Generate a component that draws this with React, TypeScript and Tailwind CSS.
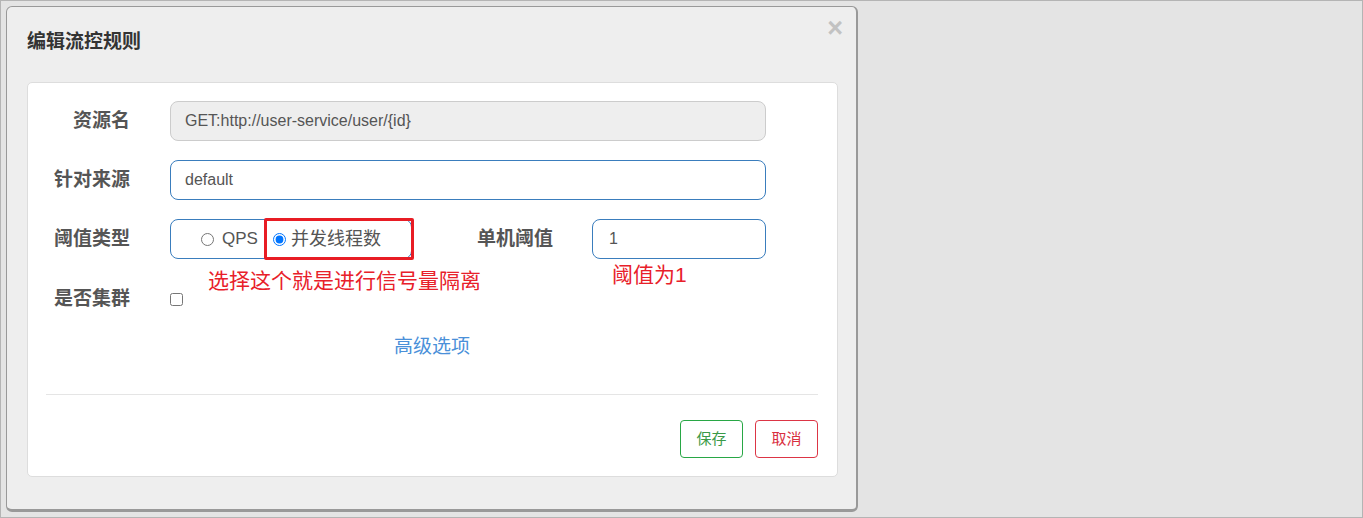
const font = { fontFamily: '"Liberation Sans", "Noto Sans CJK SC", sans-serif' };

const Label = ({ text, className = "" }: { text: string; className?: string }) => (
  <div className={`shrink-0 text-right text-[19px] font-bold text-[#555] ${className}`}>{text}</div>
);

const App = () => {
  return (
    <div style={font} className="h-[518px] w-full border border-[#b4b4b4] bg-[#e4e4e4] pl-[5px] pt-[5px]">
      <div className="flex h-[506px] w-[852px] flex-col rounded-md border-t border-l border-r-2 border-b-[3px] border-[#999] bg-[#eeeeee]">
        {/* header */}
        <div className="relative flex h-[75px] shrink-0 items-center pl-[20px] pb-[4px]">
          <h4 className="text-[19px] font-bold text-[#333]">编辑流控规则</h4>
          <span className="absolute right-[13px] top-[8px] text-[27px] font-bold leading-none text-[#c2c2c2]">×</span>
        </div>

        {/* body */}
        <div className="ml-[20px] w-[811px] rounded-[5px] border border-[#dddddd] bg-white pl-[18px] pr-[19px] pt-[18px] pb-[18px]">
          <div className="flex h-10 items-center">
            <Label text="资源名" className="w-[84px]" />
            <div className="ml-[40px] flex h-10 w-[596px] items-center rounded-lg border border-[#cccccc] bg-[#eeeeee] px-[14px] text-[16px] text-[#555]">
              GET:http://user-service/user/{"{id}"}
            </div>
          </div>

          <div className="mt-[19px] flex h-10 items-center">
            <Label text="针对来源" className="w-[84px]" />
            <div className="ml-[40px] flex h-10 w-[596px] items-center rounded-lg border border-[#3a7dbd] bg-white px-[14px] text-[16px] text-[#555]">
              default
            </div>
          </div>

          <div className="relative mt-[19px] flex h-10 items-center">
            <Label text="阈值类型" className="w-[84px]" />
            <div className="ml-[40px] flex h-10 w-[242px] items-center rounded-lg border border-[#3a7dbd] pl-[30px] text-[18px] text-[#555]">
              <label className="flex items-center gap-[8px] text-[17px]">
                <input type="radio" name="grade" className="m-0 h-[13px] w-[13px]" />
                QPS
              </label>
              <label className="ml-[15px] flex items-center gap-[5px]">
                <input type="radio" name="grade" defaultChecked className="m-0 h-[13px] w-[13px]" />
                并发线程数
              </label>
            </div>
            <Label text="单机阈值" className="w-[141px]" />
            <div className="ml-[39px] flex h-10 w-[174px] items-center rounded-lg border border-[#3a7dbd] px-[16px] text-[16px] text-[#555]">
              1
            </div>

            {/* red markup */}
            <div className="absolute left-[218px] top-[-1px] h-[42px] w-[150px] rounded-[2px] border-[3px] border-[#e81c24]" />
            <div className="absolute left-[162px] top-[49px] text-[21px] leading-[26px] text-[#e8202a]">选择这个就是进行信号量隔离</div>
            <div className="absolute left-[566px] top-[43px] text-[21px] leading-[26px] text-[#e8202a]">阈值为1</div>
          </div>

          <div className="mt-[20px] flex h-10 items-center">
            <Label text="是否集群" className="w-[84px]" />
            <input type="checkbox" className="ml-[40px] h-[13px] w-[13px]" />
          </div>

          <div className="mt-[16px] text-center text-[19px] leading-[24px] text-[#4a90d9]">高级选项</div>

          <div className="mt-[35px] h-px bg-[#e5e5e5]" />

          <div className="mt-[25px] flex justify-end gap-[12px]">
            <button className="h-[38px] w-[63px] rounded-[4px] border border-[#28a745] bg-white text-[15px] text-[#3a9a48]">
              保存
            </button>
            <button className="h-[38px] w-[63px] rounded-[4px] border border-[#dc3545] bg-white text-[15px] text-[#d9303f]">
              取消
            </button>
          </div>
        </div>
      </div>
    </div>
  );
};

export default App;
